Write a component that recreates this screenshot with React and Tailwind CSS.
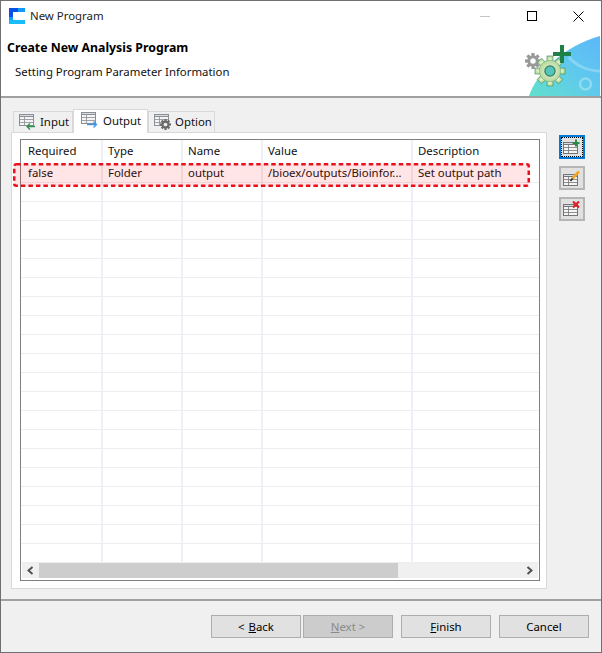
import React from 'react'

const columns = [
  { name: 'Required', width: 'w-[82px]' },
  { name: 'Type', width: 'w-[80px]' },
  { name: 'Name', width: 'w-[80px]' },
  { name: 'Value', width: 'w-[150px]' },
  { name: 'Description', width: 'flex-1' },
]
const values = ['false', 'Folder', 'output', '/bioex/outputs/Bioinfor...', 'Set output path']
const emptyRows = Array.from({ length: 20 })

function TableLines({ color = '#8a8f96', x = 0, y = 0 }) {
  return (
    <g transform={`translate(${x} ${y})`} fill="none" stroke={color} strokeWidth="1">
      <rect x="0.5" y="0.5" width="14" height="11" fill="#f4f4f4" />
      <rect x="0.5" y="0.5" width="14" height="2" fill="#d9dde2" />
      <path d="M0.5 5.5H14.5M0.5 8.5H14.5M5.5 3V11.5" strokeOpacity="0.8" />
    </g>
  )
}

function InputIcon() {
  return (
    <svg width="17" height="16" viewBox="0 0 17 16">
      <TableLines />
      <path d="M16 12.5H8M11 9.5L8 12.5L11 15.5" fill="none" stroke="#2f8f4f" strokeWidth="1.3" />
    </svg>
  )
}

function OutputIcon() {
  return (
    <svg width="17" height="16" viewBox="0 0 17 16">
      <TableLines />
      <path d="M6 12.5H15M12.5 9.5L15.5 12.5L12.5 15.5" fill="none" stroke="#3f96e0" strokeWidth="1.3" />
    </svg>
  )
}

function GearGlyph({ cx, cy, r, fill, stroke, hole, holeStroke }) {
  const teeth = Array.from({ length: 8 }, (_, i) => i * 45)
  return (
    <g>
      {teeth.map((a) => (
        <rect
          key={a}
          x={cx - r * 0.2}
          y={cy - r}
          width={r * 0.4}
          height={r * 0.5}
          fill={fill}
          stroke={stroke}
          strokeWidth={stroke ? 0.7 : 0}
          transform={`rotate(${a} ${cx} ${cy})`}
        />
      ))}
      <circle cx={cx} cy={cy} r={r * 0.72} fill={fill} stroke={stroke} strokeWidth={stroke ? 0.4 : 0} />
      <circle cx={cx} cy={cy} r={r * 0.34} fill={hole} stroke={holeStroke} strokeWidth={holeStroke ? 1.2 : 0} />
    </g>
  )
}

function OptionIcon() {
  return (
    <svg width="17" height="16" viewBox="0 0 17 16">
      <TableLines />
      <GearGlyph cx={11.5} cy={10.5} r={5.5} fill="#6a6a6a" hole="#eee" />
    </svg>
  )
}

function AddIcon() {
  return (
    <svg width="18" height="16" viewBox="0 0 18 16">
      <TableLines y={3} color="#757575" />
      <path d="M13 0.5V7.5M9.5 4H16.5" stroke="#2a8a4a" strokeWidth="2" />
    </svg>
  )
}

function EditIcon() {
  return (
    <svg width="18" height="17" viewBox="0 0 18 17">
      <TableLines y={4} color="#757575" />
      <path d="M16 1.5L9 9" stroke="#f0a820" strokeWidth="2.6" />
      <path d="M9.5 8.5L7.5 11" stroke="#333" strokeWidth="1.8" />
    </svg>
  )
}

function RemoveIcon() {
  return (
    <svg width="18" height="16" viewBox="0 0 18 16">
      <TableLines y={3} color="#757575" />
      <path d="M10 0.5L16 6.5M16 0.5L10 6.5" stroke="#d8252b" strokeWidth="2.2" />
    </svg>
  )
}

function Logo() {
  return (
    <svg width="16" height="16" viewBox="0 0 16 16">
      <rect width="16" height="16" fill="#0f9bf5" />
      <rect width="9" height="9" fill="#0a50e8" />
      <rect y="12" width="16" height="4" fill="#18bcf8" />
      <rect x="4" y="4" width="12" height="8" fill="#fff" />
    </svg>
  )
}

function BannerArt() {
  return (
    <svg className="absolute right-0 bottom-0" width="82" height="60" viewBox="0 0 82 60">
      <defs>
        <linearGradient id="sky" x1="0" y1="1" x2="1" y2="0">
          <stop offset="0" stopColor="#62e0cc" />
          <stop offset="0.55" stopColor="#5fc8ee" />
          <stop offset="1" stopColor="#5cb8fa" />
        </linearGradient>
        <radialGradient id="leaf" cx="0.5" cy="0.5" r="0.6">
          <stop offset="0" stopColor="#f4f8e2" />
          <stop offset="1" stopColor="#a9d08c" />
        </radialGradient>
      </defs>
      <path d="M10 60C18 36 45 10 81 0V60Z" fill="url(#sky)" />
      <path d="M50 21C56 29 68 35 82 35" fill="none" stroke="#fff" strokeOpacity="0.25" strokeWidth="3" />
      <circle cx="66.5" cy="48" r="5.5" fill="none" stroke="#fff" strokeOpacity="0.3" strokeWidth="2.5" />
      <GearGlyph cx={14} cy={25} r={8} fill="#999" hole="#fff" />
      <GearGlyph cx={31} cy={35} r={15} fill="url(#leaf)" stroke="#4a9a66" hole="#55c4bc" holeStroke="#2a8060" />
      <path d="M43 9V27M34 18H52" stroke="#1f8048" strokeWidth="4" />
    </svg>
  )
}

function Tab({ icon, label, active, width }) {
  if (active) {
    return (
      <div className={`relative z-10 -mb-px flex h-[24px] items-start gap-[5px] border border-b-0 border-[#d9d9d9] bg-white pl-[7px] pt-[2px] ${width}`}>
        {icon}
        <span className="leading-[17px]">{label}</span>
      </div>
    )
  }
  return (
    <div className={`flex h-[21px] items-center gap-[4px] border border-b-0 border-[#d9d9d9] bg-[#f0f0f0] pl-[5px] ${width}`}>
      {icon}
      <span>{label}</span>
    </div>
  )
}

function SideButton({ children, focused }) {
  const cls = focused
    ? 'border-2 border-[#0078d7] outline-1 -outline-offset-3 outline-dotted outline-black'
    : 'border-2 border-[#b5b5b5]'
  return <div className={`flex h-[24px] w-[26px] items-center justify-center bg-[#e1e1e1] ${cls}`}>{children}</div>
}

function WizardButton({ children, disabled }) {
  return (
    <div
      className={`flex h-[23px] w-[90px] items-center justify-center border border-[#adadad] ${
        disabled ? 'bg-[#cccccc] text-[#8a8a8a]' : 'bg-[#e1e1e1] text-black'
      }`}
    >
      {children}
    </div>
  )
}

export default function App() {
  return (
    <div className="flex h-[653px] w-[602px] flex-col border border-[#707070] bg-[#f0f0f0] font-['Noto_Sans','Liberation_Sans',sans-serif] text-[11.4px] text-[#111]">
      {/* Title bar */}
      <div className="flex h-[30px] items-center bg-white pl-[8px]">
        <Logo />
        <span className="ml-[5px] text-[#222]">New Program</span>
        <div className="ml-auto flex items-center">
          <div className="mr-[37px] h-px w-[10px] bg-[#c4c4c4]" />
          <div className="mr-[36px] h-[10px] w-[10px] border border-black" />
          <svg className="mr-[17px]" width="11" height="11" viewBox="0 0 11 11">
            <path d="M0.5 0.5L10.5 10.5M10.5 0.5L0.5 10.5" stroke="#000" strokeWidth="1" />
          </svg>
        </div>
      </div>

      {/* Header */}
      <div className="relative h-[67px] overflow-hidden border-b-2 border-[#a0a0a0] bg-white">
        <div className="pl-[6px] pt-[8px] text-[12.3px] font-bold leading-[18px] text-black">Create New Analysis Program</div>
        <div className="pl-[14px] pt-[6px] leading-[18px]">Setting Program Parameter Information</div>
        <BannerArt />
      </div>

      {/* Body */}
      <div className="flex flex-1 items-start pl-[10px] pt-[11px]">
        <div className="w-[536px]">
          <div className="flex items-end pl-[2px]">
            <Tab icon={<InputIcon />} label="Input" width="w-[60px]" />
            <Tab icon={<OutputIcon />} label="Output" width="w-[75px]" active />
            <Tab icon={<OptionIcon />} label="Option" width="w-[67px]" />
          </div>
          <div className="h-[457px] border border-[#d9d9d9] bg-white pl-[8px] pr-[6px] pt-[6px]">
            <div className="relative flex h-[442px] flex-col border border-[#808080] bg-white">
              <div className="flex h-[23px] shrink-0">
                {columns.map((col) => (
                  <div key={col.name} className={`${col.width} border-r-2 border-[#edf1f7] pl-[5px] leading-[22px] first:pl-[7px] last:border-r-0`}>
                    {col.name}
                  </div>
                ))}
              </div>
              <div className="flex-1 overflow-hidden">
                <div className="flex h-[20px]">
                  {columns.map((col, i) => (
                    <div key={col.name} className={`${col.width} truncate border-r-2 border-b border-[#eeeef2] pl-[5px] leading-[20px] first:pl-[7px] last:border-r-0`}>
                      {values[i]}
                    </div>
                  ))}
                </div>
                {emptyRows.map((_, r) => (
                  <div key={r} className="flex h-[19px]">
                    {columns.map((col) => (
                      <div key={col.name} className={`${col.width} border-r-2 border-b border-r-[#edf1f7] border-b-[#eeeeee] last:border-r-0`} />
                    ))}
                  </div>
                ))}
              </div>
              {/* horizontal scrollbar */}
              <div className="mx-[1px] mb-[2px] flex h-[15px] shrink-0 items-center bg-[#f0f0f0]">
                <div className="flex w-[17px] justify-center">
                  <svg width="7" height="9" viewBox="0 0 7 9">
                    <path d="M5.5 1L1.5 4.5L5.5 8" fill="none" stroke="#505050" strokeWidth="2" />
                  </svg>
                </div>
                <div className="h-full w-[359px] bg-[#cdcdcd]" />
                <div className="ml-auto flex w-[17px] justify-center">
                  <svg width="7" height="9" viewBox="0 0 7 9">
                    <path d="M1.5 1L5.5 4.5L1.5 8" fill="none" stroke="#505050" strokeWidth="2" />
                  </svg>
                </div>
              </div>
              {/* red highlight */}
              <svg className="absolute left-[-8px] top-[23px]" width="517" height="24" viewBox="0 0 517 24">
                <rect x="1.25" y="1.25" width="514.5" height="21.5" rx="2" fill="#ff0000" fillOpacity="0.1" stroke="#e8101c" strokeWidth="2.5" strokeDasharray="4.5 3" />
              </svg>
            </div>
          </div>
        </div>

        <div className="ml-[12px] flex flex-col gap-[7px] pt-[26px]">
          <SideButton focused><AddIcon /></SideButton>
          <SideButton><EditIcon /></SideButton>
          <SideButton><RemoveIcon /></SideButton>
        </div>
      </div>

      {/* Footer */}
      <div className="flex h-[53px] items-start justify-end border-t-2 border-[#a0a0a0] pr-[12px] pt-[14px]">
        <div className="flex">
          <WizardButton>&lt; <u className="ml-1">B</u>ack</WizardButton>
          <div className="ml-[2px]">
            <WizardButton disabled><u>N</u>ext &gt;</WizardButton>
          </div>
          <div className="ml-[8px]">
            <WizardButton><u>F</u>inish</WizardButton>
          </div>
          <div className="ml-[8px]">
            <WizardButton>Cancel</WizardButton>
          </div>
        </div>
      </div>
    </div>
  )
}
